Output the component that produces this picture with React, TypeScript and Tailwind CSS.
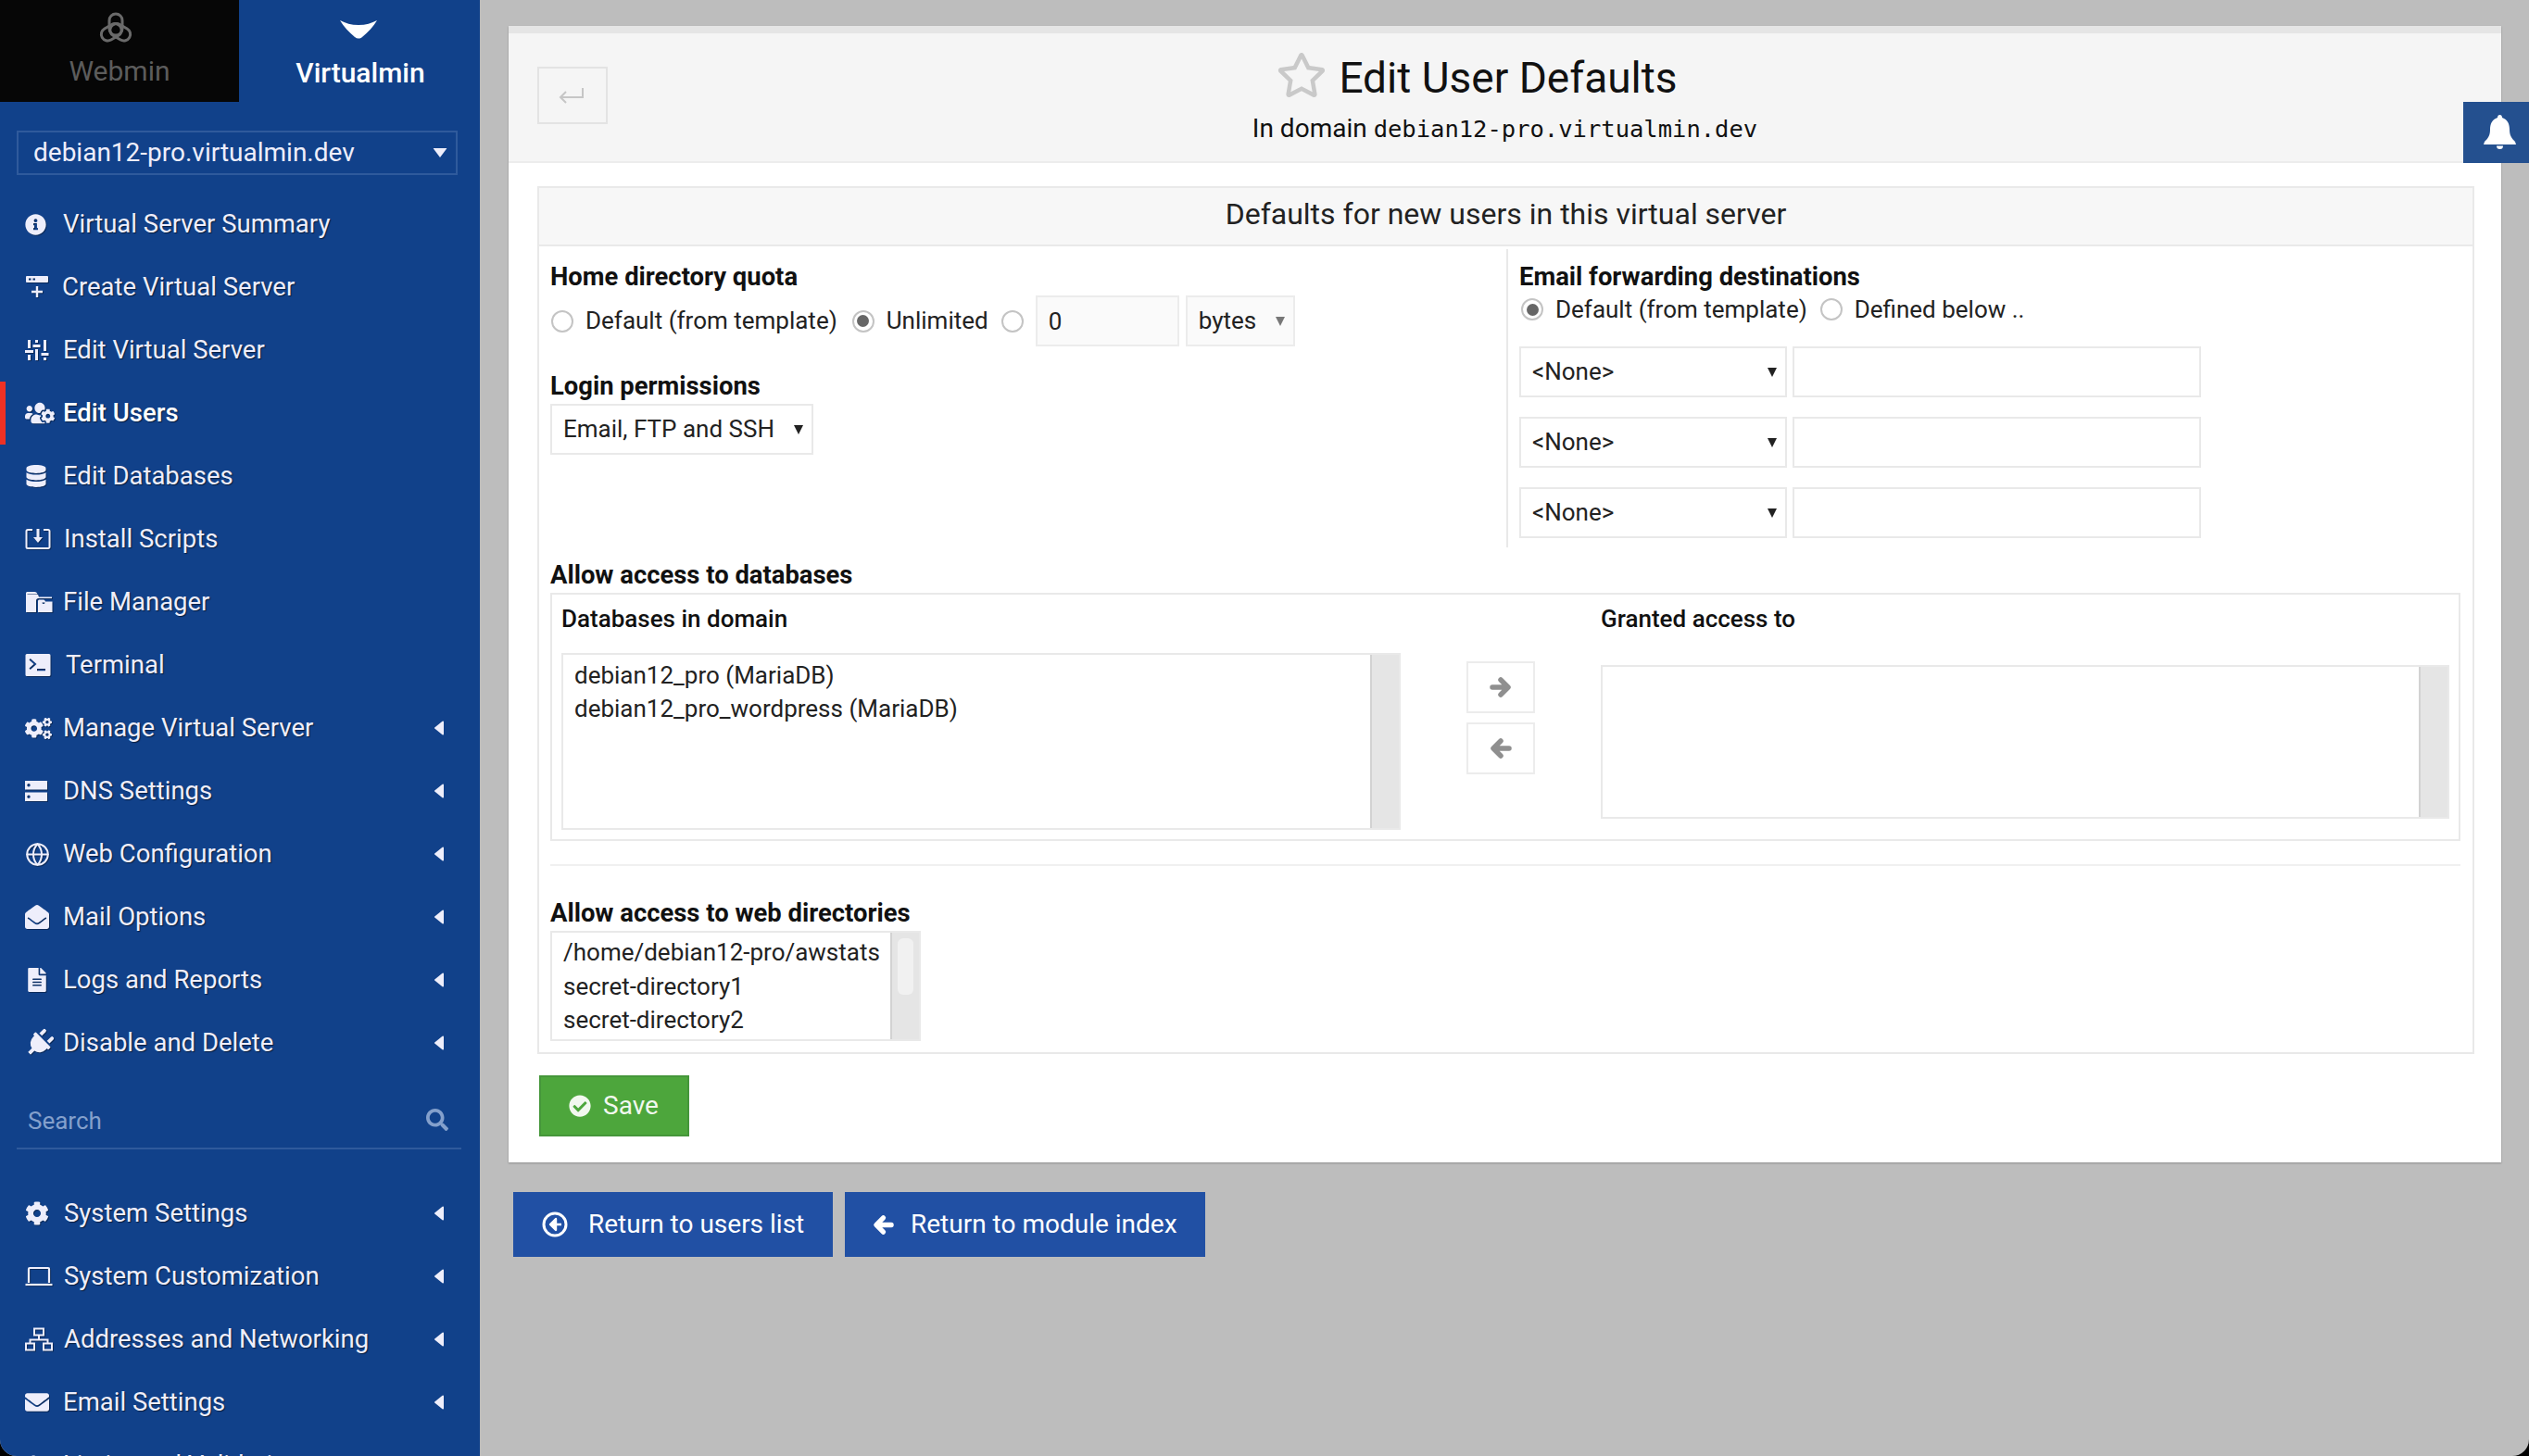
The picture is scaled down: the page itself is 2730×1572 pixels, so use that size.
import type { ReactNode } from 'react';
import {
  FaCheckCircle,
  FaCog,
  FaCogs,
  FaDatabase,
  FaEnvelope,
  FaEnvelopeOpen,
  FaFileAlt,
  FaInfoCircle,
  FaPlug,
  FaRegStar,
  FaSearch,
  FaUserCheck,
  FaUsersCog,
} from 'react-icons/fa';
import { Globe } from 'lucide-react';

// Small drawings the icon packs have no match for
const ServerPlus = () => (
  <svg width="26" height="26" viewBox="0 0 26 26" fill="currentColor">
    <path fillRule="evenodd" d="M2 1h22a1 1 0 0 1 1 1v5a1 1 0 0 1-1 1H2a1 1 0 0 1-1-1V2a1 1 0 0 1 1-1zm2 2.500v2h2.500v-2zm4.500 0v2H11v-2z" />
    <path d="M11.800 12h2.400v4.800H19v2.400h-4.800V24h-2.400v-4.800H7v-2.400h4.800z" />
  </svg>
);
const SlidersV = () => (
  <svg width="26" height="24" viewBox="0 0 26 24" fill="currentColor">
    <rect x="3" y="1" width="3" height="9" />
    <rect x="0" y="12" width="9" height="3" />
    <rect x="3" y="17" width="3" height="6" />
    <rect x="11" y="1" width="3" height="3" />
    <rect x="8.500" y="6" width="8" height="3" />
    <rect x="11" y="11" width="3" height="12" />
    <rect x="20" y="1" width="3" height="12" />
    <rect x="17.500" y="15" width="8" height="3" />
    <rect x="20" y="20" width="3" height="3" />
  </svg>
);
const InstallBox = () => (
  <svg width="28" height="24" viewBox="0 0 28 24" fill="none" stroke="currentColor" strokeWidth="2">
    <path d="M8 2H3a1.500 1.500 0 0 0-1.500 1.500v17A1.500 1.500 0 0 0 3 22h22a1.500 1.500 0 0 0 1.500-1.500v-17A1.500 1.500 0 0 0 25 2h-5" />
    <path d="M14 1v12" strokeWidth="3" />
    <path d="M9 10h10l-5 6z" fill="currentColor" stroke="none" />
  </svg>
);
const FilesIcon = () => (
  <svg width="30" height="24" viewBox="0 0 30 24" fill="currentColor">
    <path fillRule="evenodd" d="M1 2.500C1 1.500 1.800 1 2.500 1h8C12 1 13 2 13.500 3.500H2.500V4H14l1 2.500h14V8H14.500C13 8 12 9 12 10.500V23H1zM14 11c0-1 .8-1.500 1.500-1.500H20c1 0 1.500.8 2 2h7.500V23H14zm4.500 1.500a1.500 1.500 0 1 0 3 0h-3z" />
  </svg>
);
const TerminalBox = () => (
  <svg width="28" height="26" viewBox="0 0 28 26" fill="currentColor">
    <path fillRule="evenodd" d="M2 1h24a1.500 1.500 0 0 1 1.500 1.500v21A1.500 1.500 0 0 1 26 25H2a1.500 1.500 0 0 1-1.500-1.500v-21A1.500 1.500 0 0 1 2 1zm2.500 6.500L9.500 12l-5 4.500 1.300 1.500 6.700-6-6.700-6zM13 17v2.200h9V17z" />
  </svg>
);
const TwoServers = () => (
  <svg width="24" height="24" viewBox="0 0 24 24" fill="currentColor">
    <path fillRule="evenodd" d="M0 1h24v9.500H0zm4 3a1.700 1.700 0 1 0 0 3.400A1.700 1.700 0 0 0 4 4zM0 13.500h24V23H0zm4 3a1.700 1.700 0 1 0 0 3.400 1.700 1.700 0 0 0 0-3.400z" />
  </svg>
);
const LaptopLine = () => (
  <svg width="30" height="24" viewBox="0 0 30 24" fill="none" stroke="currentColor" strokeWidth="2.200">
    <path d="M4 19V4a1 1 0 0 1 1-1h20a1 1 0 0 1 1 1v15" />
    <path d="M0.500 21h29" />
  </svg>
);
const NetworkLine = () => (
  <svg width="30" height="26" viewBox="0 0 30 26" fill="none" stroke="currentColor" strokeWidth="2">
    <rect x="10" y="1.500" width="10" height="7" />
    <rect x="1" y="17.500" width="9" height="7" />
    <rect x="20" y="17.500" width="9" height="7" />
    <path d="M15 8.500v5M5.500 17.500v-4h19v4" />
  </svg>
);
// Three looped lobes round one centre, like the Webmin knot
const WebminLogo = () => (
  <svg width="36" height="34" viewBox="0 0 36 34" fill="none" stroke="#6a6a6a" strokeWidth="3">
    <rect x="11" y="2" width="14" height="23" rx="7" />
    <rect x="11" y="2" width="14" height="23" rx="7" transform="rotate(120 18 19)" />
    <rect x="11" y="2" width="14" height="23" rx="7" transform="rotate(240 18 19)" />
  </svg>
);
const VirtualminLogo = () => (
  <svg width="40" height="22" viewBox="0 0 40 22" fill="#fff">
    <path d="M0 1c6 3 12 5 20 5s14-2 20-5c-4 7-10 13-16 18-2.500 2-5.500 2-8 0C10 14 4 8 0 1z" />
  </svg>
);
const CaretLeft = () => (
  <svg width="10" height="16" viewBox="0 0 10 16" fill="currentColor">
    <path d="M8.500 0.800a1 1 0 0 1 1.500.8v12.800a1 1 0 0 1-1.500.8L0.500 8.800a1 1 0 0 1 0-1.600z" />
  </svg>
);
const CircleBack = () => (
  <svg width="28" height="28" viewBox="0 0 28 28" fill="none" stroke="#fff" strokeWidth="3">
    <circle cx="14" cy="14" r="12" />
    <path d="M15 8l-6 6 6 6zM14 14h7" fill="#fff" strokeWidth="2.400" strokeLinejoin="round" />
  </svg>
);
const ThickArrow = ({ flip, size = 24 }: { flip?: boolean; size?: number }) => (
  <svg width={size} height={size} viewBox="0 0 24 24" fill="none" stroke="currentColor" strokeWidth="5.500" strokeLinecap="round" strokeLinejoin="round" className={flip ? '-scale-x-100' : ''}>
    <path d="M3 12h16M12 4l8 8-8 8" />
  </svg>
);
const ReturnArrow = () => (
  <svg width="28" height="18" viewBox="0 0 28 18" fill="none" stroke="currentColor" strokeWidth="2">
    <path d="M2 11h24V1" />
    <path d="M8 5l-6 6 6 6" />
  </svg>
);
const BellIcon = () => (
  <svg width="35" height="38" viewBox="0 0 35 38" fill="currentColor">
    <path d="M17.500 0C16 0 15 1 15 3 9 5 7 10 7 16c0 6-2 9-6 13l-1 3h35l-1-3c-4-4-6-7-6-13 0-6-2-11-8-13 0-2-1-3-2.500-3z" />
    <path d="M14 33.500h7a3.500 3.500 0 0 1-7 0z" />
  </svg>
);
const Triangle = ({ className }: { className: string }) => (
  <svg width="10" height="12" viewBox="0 0 10 12" className={className} fill="currentColor">
    <path d="M0 1h10l-5 10z" />
  </svg>
);

type NavItem = { icon: ReactNode; label: string; textClass?: string; arrow?: boolean; active?: boolean };

const topItems: NavItem[] = [
  { icon: <FaInfoCircle size={23} />, label: 'Virtual Server Summary' },
  { icon: <ServerPlus />, label: 'Create Virtual Server', textClass: '-ml-[1px]' },
  { icon: <SlidersV />, label: 'Edit Virtual Server' },
  { icon: <FaUsersCog size={32} />, label: 'Edit Users', active: true },
  { icon: <FaDatabase size={24} />, label: 'Edit Databases' },
  { icon: <InstallBox />, label: 'Install Scripts', textClass: 'ml-[1px]' },
  { icon: <FilesIcon />, label: 'File Manager' },
  { icon: <TerminalBox />, label: 'Terminal', textClass: 'ml-[3px]' },
  { icon: <FaCogs size={29} />, label: 'Manage Virtual Server', arrow: true },
  { icon: <TwoServers />, label: 'DNS Settings', arrow: true },
  { icon: <Globe size={27} strokeWidth={1.8} />, label: 'Web Configuration', arrow: true },
  { icon: <FaEnvelopeOpen size={26} />, label: 'Mail Options', arrow: true },
  { icon: <FaFileAlt size={26} />, label: 'Logs and Reports', arrow: true },
  { icon: <FaPlug size={31} className="rotate-45" />, label: 'Disable and Delete', arrow: true },
];

const bottomItems: NavItem[] = [
  { icon: <FaCog size={26} />, label: 'System Settings', textClass: 'ml-[1px]', arrow: true },
  { icon: <LaptopLine />, label: 'System Customization', textClass: 'ml-[1px]', arrow: true },
  { icon: <NetworkLine />, label: 'Addresses and Networking', textClass: 'ml-[1px]', arrow: true },
  { icon: <FaEnvelope size={26} />, label: 'Email Settings', arrow: true },
  { icon: <FaUserCheck size={26} />, label: 'Limits and Validation', arrow: true },
];

function NavRow({ item }: { item: NavItem }) {
  return (
    <div className="relative flex h-[68px] shrink-0 items-center pl-[27px] pr-[39px] text-[#eeeefb] [text-shadow:1px_1px_1px_rgba(0,0,0,0.55)]">
      {item.active && <div className="absolute left-0 top-0 h-[68px] w-[6px] bg-[#ee3124]" />}
      <span className="flex w-[41px] shrink-0 items-center justify-start [filter:drop-shadow(1px_1px_0_rgba(0,0,0,0.35))]">
        {item.icon}
      </span>
      <span className={`flex-1 text-[27.500px] ${item.active ? 'font-medium text-white' : ''} ${item.textClass ?? ''}`}>
        {item.label}
      </span>
      {item.arrow && <CaretLeft />}
    </div>
  );
}

function Sidebar() {
  return (
    <aside className="flex w-[518px] shrink-0 flex-col bg-[#11418a]">
      <div className="flex h-[110px] shrink-0">
        <div className="flex w-[258px] flex-col items-center bg-[#060606] pt-[13px] text-[30px] leading-[40px] text-[#5c5c5c]">
          <span className="mr-[9px]"><WebminLogo /></span>
          <span className="mt-[10px]">Webmin</span>
        </div>
        <div className="flex flex-1 flex-col items-center pt-[21px] text-[30px] font-medium leading-[40px] text-white">
          <span className="mr-[3px]"><VirtualminLogo /></span>
          <span className="mt-[16px] pl-[2px]">Virtualmin</span>
        </div>
      </div>
      <div className="mx-[18px] mt-[31px] flex h-[48px] w-[476px] shrink-0 items-center justify-between border-2 border-[#2f5a9c] pl-[16px] pr-[12px] text-[28px] text-[#eeeefb]">
        <span>debian12-pro.virtualmin.dev</span>
        <Triangle className="text-[#eeeefb] scale-x-150" />
      </div>
      <nav className="mt-[19px] shrink-0">
        {topItems.map((item) => (
          <NavRow key={item.label} item={item} />
        ))}
      </nav>
      <div className="mx-[18px] flex h-[81px] w-[480px] shrink-0 items-end justify-between border-b-2 border-[#2f5a9c] pb-[9px] pl-[12px] pr-[14px] text-[26px] text-[#84a0cc]">
        <span>Search</span>
        <FaSearch size={24} className="mb-[9px]" />
      </div>
      <nav className="mt-[35px] shrink-0">
        {bottomItems.map((item) => (
          <NavRow key={item.label} item={item} />
        ))}
      </nav>
    </aside>
  );
}

const Radio = ({ checked }: { checked?: boolean }) => (
  <span className="flex h-[24px] w-[24px] shrink-0 items-center justify-center rounded-full border-2 border-[#c4c4c4] bg-white">
    {checked && <span className="h-[13px] w-[13px] rounded-full bg-[#666666]" />}
  </span>
);

const FieldLabel = ({ children }: { children: ReactNode }) => (
  <div className="flex h-[36px] items-center pt-[3px] text-[27.400px] font-bold leading-none text-[#111111]">{children}</div>
);

const SubLabel = ({ children }: { children: ReactNode }) => (
  <div className="flex h-[36px] items-center text-[26px] font-medium leading-none text-[#111111]">{children}</div>
);

function SelectBox({ label, className }: { label: string; className: string }) {
  return (
    <div className={`flex h-[55px] items-center justify-between border-2 border-[#e9e9e9] bg-white pl-[12px] pr-[9px] text-[26px] text-[#222222] ${className}`}>
      <span>{label}</span>
      <Triangle className="text-[#222222]" />
    </div>
  );
}

function Scrollbar({ thumb }: { thumb?: boolean }) {
  return (
    <div className="w-[31px] shrink-0 border-l-2 border-[#d2d2d2] bg-[#e5e5e5] pl-[6px] pt-[6px]">
      {thumb && <div className="h-[61px] w-[17px] rounded-[6px] bg-[#f1f1f1]" />}
    </div>
  );
}

function ArrowButton({ children }: { children: ReactNode }) {
  return (
    <div className="flex h-[56px] w-[74px] items-center justify-center border-2 border-[#ececec] bg-white text-[#8f8f8f]">
      {children}
    </div>
  );
}

function ForwardRow() {
  return (
    <div className="flex gap-[6px]">
      <SelectBox label="<None>" className="w-[289px]" />
      <input readOnly className="h-[55px] w-[441px] border-2 border-[#e9e9e9] bg-white outline-none" />
    </div>
  );
}

function UserDefaultsForm() {
  return (
    <section className="w-[2091px] border-2 border-[#e9e9e9]">
      <div className="flex h-[63px] items-center justify-center border-b-2 border-[#e9e9e9] bg-[#f7f7f7] pb-[5px] text-[32px] text-[#222222]">
        Defaults for new users in this virtual server
      </div>
      <div className="flex h-[325px] pl-[12px]">
        <div className="w-[1032px] pt-[14px]">
          <FieldLabel>Home directory quota</FieldLabel>
          <div className="mt-[3px] flex h-[55px] items-center text-[26px] text-[#222222]">
            <span className="ml-[1px]"><Radio /></span>
            <span className="ml-[13px]">Default (from template)</span>
            <span className="ml-[16px]"><Radio checked /></span>
            <span className="ml-[13px]">Unlimited</span>
            <span className="ml-[14px]"><Radio /></span>
            <input
              readOnly
              value="0"
              className="ml-[13px] h-[55px] w-[155px] border-2 border-[#ececec] bg-[#fafafa] pl-[12px] text-[26px] outline-none"
            />
            <div className="ml-[7px] flex h-[55px] w-[118px] items-center justify-between border-2 border-[#ececec] bg-[#fafafa] pl-[12px] pr-[9px]">
              <span>bytes</span>
              <Triangle className="text-[#777777]" />
            </div>
          </div>
          <div className="mt-[24px]">
            <FieldLabel>Login permissions</FieldLabel>
          </div>
          <SelectBox label="Email, FTP and SSH" className="mt-[2px] w-[284px]" />
        </div>
        <div className="mt-[3px] flex-1 border-l-2 border-[#e9e9e9] pl-[12px] pt-[11px]">
          <FieldLabel>Email forwarding destinations</FieldLabel>
          <div className="flex h-[36px] items-center text-[26px] text-[#222222]">
            <span className="ml-[2px]"><Radio checked /></span>
            <span className="ml-[13px]">Default (from template)</span>
            <span className="ml-[14px]"><Radio /></span>
            <span className="ml-[13px]">Defined below ..</span>
          </div>
          <div className="mt-[22px] flex flex-col gap-[21px]">
            <ForwardRow />
            <ForwardRow />
            <ForwardRow />
          </div>
        </div>
      </div>
      <div className="pb-[12px] pl-[12px] pr-[12px] pt-[11px]">
        <FieldLabel>Allow access to databases</FieldLabel>
        <div className="mt-[2px] flex h-[268px] w-[2062px] items-start border-2 border-[#e9e9e9] pl-[10px] pt-[8px]">
          <div className="w-[906px]">
            <SubLabel>Databases in domain</SubLabel>
            <div className="mt-[19px] flex h-[191px] border-2 border-[#e9e9e9]">
              <div className="flex-1 pl-[12px] pt-[4px] text-[26px] leading-[36px] text-[#222222]">
                <div>debian12_pro (MariaDB)</div>
                <div>debian12_pro_wordpress (MariaDB)</div>
              </div>
              <Scrollbar />
            </div>
          </div>
          <div className="ml-[71px] mt-[64px] flex flex-col gap-[10px]">
            <ArrowButton><ThickArrow /></ArrowButton>
            <ArrowButton><ThickArrow flip /></ArrowButton>
          </div>
          <div className="ml-[71px] w-[916px]">
            <SubLabel>Granted access to</SubLabel>
            <div className="mt-[32px] flex h-[166px] border-2 border-[#e9e9e9]">
              <div className="flex-1" />
              <Scrollbar />
            </div>
          </div>
        </div>
        <div className="mt-[25px] h-[2px] w-[2062px] bg-[#f0f0f0]" />
        <div className="mt-[32px]">
          <FieldLabel>Allow access to web directories</FieldLabel>
        </div>
        <div className="mt-[2px] flex h-[119px] w-[400px] border-2 border-[#e9e9e9]">
          <div className="flex-1 whitespace-nowrap pl-[12px] pt-[3px] text-[26px] leading-[36.500px] text-[#222222]">
            <div>/home/debian12-pro/awstats</div>
            <div>secret-directory1</div>
            <div>secret-directory2</div>
          </div>
          <Scrollbar thumb />
        </div>
      </div>
    </section>
  );
}

function ReturnButton({ icon, label, className }: { icon: ReactNode; label: string; className: string }) {
  return (
    <div className={`flex h-[70px] items-center bg-[#2150a4] text-[28px] text-white ${className}`}>
      {icon}
      <span>{label}</span>
    </div>
  );
}

export default function App() {
  return (
    <div className="h-[1572px] w-[2730px] overflow-hidden bg-black [font-family:Roboto,sans-serif]">
      <div className="relative flex h-[1572px] overflow-hidden rounded-b-[18px] bg-[#bdbdbd]">
        <Sidebar />
        <main className="flex-1 pl-[31px] pt-[28px]">
          <div className="w-[2151px] border-t-8 border-[#e5e5e5] bg-white shadow-[0_1px_2px_rgba(0,0,0,0.25)]">
            <header className="grid h-[140px] grid-cols-[107px_1fr_107px] border-b-2 border-[#ececec] bg-[#f5f5f5]">
              <div className="pl-[31px] pt-[36px]">
                <div className="flex h-[62px] w-[76px] items-center justify-center border-2 border-[#e3e3e3] pr-[2px] text-[#c6c6c6]">
                  <ReturnArrow />
                </div>
              </div>
              <div className="flex flex-col items-center pt-[21px] text-[#111111]">
                <h1 className="relative ml-[7px] text-[46px] leading-[54px]">
                  <FaRegStar size={54} className="absolute left-[-67px] top-[-3px] text-[#c9c9c9]" />
                  Edit User Defaults
                </h1>
                <div className="mt-[11px] text-[28px] leading-[34px]">
                  In domain <span className="text-[25.500px] [font-family:'DejaVu_Sans_Mono',monospace]">debian12-pro.virtualmin.dev</span>
                </div>
              </div>
            </header>
            <div className="pb-[28px] pl-[31px] pt-[25px]">
              <UserDefaultsForm />
              <button className="ml-[2px] mt-[23px] flex h-[66px] w-[162px] items-center gap-[13px] border-2 border-[#45963a] bg-[#4da63c] pl-[30px] text-[28px] text-[#f2f8ef]">
                <FaCheckCircle size={24} />
                Save
              </button>
            </div>
          </div>
          <div className="ml-[5px] mt-[32px] flex gap-[13px]">
            <ReturnButton icon={<span className="mr-[22px]"><CircleBack /></span>} label="Return to users list" className="w-[345px] pl-[31px]" />
            <ReturnButton icon={<span className="mr-[18px]"><ThickArrow size={23} flip /></span>} label="Return to module index" className="w-[389px] pl-[30px]" />
          </div>
        </main>
        <div className="absolute right-0 top-[110px] flex h-[66px] w-[71px] items-center justify-center bg-[#24508f] pl-[7px] text-white">
          <BellIcon />
        </div>
      </div>
    </div>
  );
}
